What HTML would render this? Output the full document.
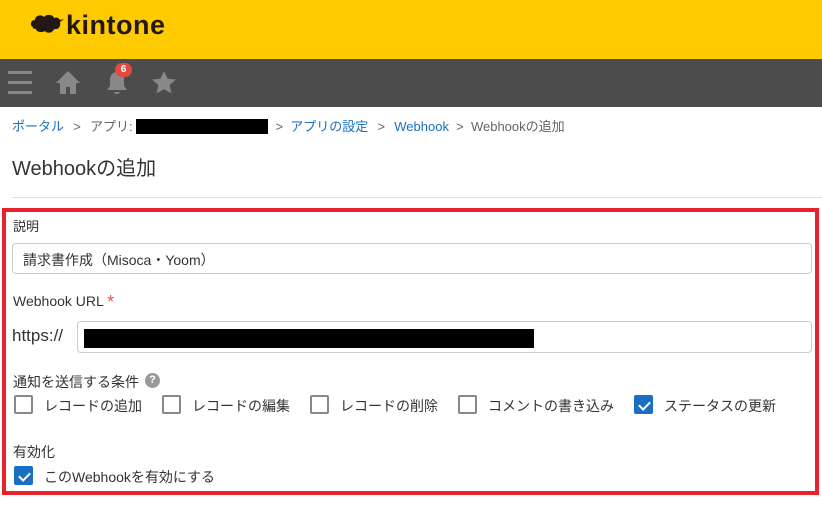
<!DOCTYPE html>
<html><head><meta charset="utf-8"><style>
*{margin:0;padding:0;box-sizing:border-box}
body{width:822px;height:505px;overflow:hidden;background:#fff;font-family:"Liberation Sans","Noto Sans CJK JP",sans-serif;color:#333;position:relative}
.a{position:absolute;white-space:nowrap}
.cb{position:absolute;width:19px;height:19px;border:2px solid #888;border-radius:2px;background:#fff}
.cb.on{background:#1b6fc2;border-color:#1b6fc2}
.cb.on:after{content:"";position:absolute;left:5px;top:2px;width:5px;height:9px;border:solid #fff;border-width:0 2px 2px 0;transform:rotate(45deg)}
.lbl{position:absolute;font-size:14px;color:#333;white-space:nowrap}
.sep{display:inline-block;width:22px;text-align:center;color:#666}
</style></head><body>
<div class="a" style="left:0;top:0;width:822px;height:59px;background:#fdcb00"></div>
<svg class="a" style="left:30px;top:13px" width="34" height="26" viewBox="0 0 34 26"><path d="M3 14c-3-1-3-7 2-7 0-5 7-6 9-3 2-3 9-3 10 1 3-1 5 0 6 2l4-1-4 3c1 5-2 8-6 7-1 4-7 5-9 2-3 2-9 1-9-2-2 0-4-1-3-2z" fill="#231815"/></svg>
<div class="a" style="left:66px;top:10px;font-size:27px;font-weight:bold;color:#231815;letter-spacing:0.5px">kintone</div>
<div class="a" style="left:0;top:59px;width:822px;height:48px;background:#4c4c4c"></div>
<div class="a" style="left:8px;top:71px;width:24px;height:3px;background:#888;box-shadow:0 10px 0 #888,0 20px 0 #888"></div>
<svg class="a" style="left:55px;top:70px" width="26" height="26" viewBox="0 0 26 26"><path d="M13 1L1 13h4v11h6v-7h4v7h6V13h4z" fill="#888"/></svg>
<svg class="a" style="left:104px;top:70px" width="26" height="26" viewBox="0 0 26 26"><path d="M13 2c-5 0-7 4-7 8v6l-3 4h20l-3-4v-6c0-4-2-8-7-8zM10 22h6a3 2 0 0 1-6 0z" fill="#888"/></svg>
<div class="a" style="left:115px;top:63px;width:17px;height:14px;border-radius:7px;background:#e04a3f;color:#fff;font-size:10px;text-align:center;line-height:14px;font-weight:bold">6</div>
<svg class="a" style="left:151px;top:70px" width="26" height="26" viewBox="0 0 24 24"><path d="M12 1l3.3 7 7.7.8-5.8 5.2 1.7 7.6L12 17.8 5.1 21.6l1.7-7.6L1 8.8 8.7 8z" fill="#888"/></svg>
<div class="a" style="left:12px;top:116px;font-size:13px;color:#666"><span style="color:#1b6fc2">ポータル</span><span class="sep" style="width:26px">&gt;</span>アプリ: <span style="display:inline-block;width:132px;height:15px;background:#000;vertical-align:-3px"></span><span class="sep">&gt;</span><span style="color:#1b6fc2">アプリの設定</span><span class="sep" style="width:26px">&gt;</span><span style="color:#1b6fc2">Webhook</span><span class="sep">&gt;</span>Webhookの追加</div>
<div class="a" style="left:12px;top:152px;font-size:20px;color:#333">Webhookの追加</div>
<div class="a" style="left:12px;top:197px;width:810px;height:1px;background:#ddd"></div>
<div class="a" style="left:2px;top:208px;width:817px;height:287px;border:4px solid #e8222a"></div>
<div class="lbl" style="left:13px;top:216px;font-size:13px">説明</div>
<div class="a" style="left:12px;top:243px;width:800px;height:31px;border:1px solid #ccc;border-radius:4px;font-size:14px;padding:6px 10px">請求書作成（Misoca・Yoom）</div>
<div class="lbl" style="left:13px;top:292px">Webhook URL <span style="color:#e8533f;font-size:18px;vertical-align:-2px">*</span></div>
<div class="lbl" style="left:12px;top:326px;font-size:17px">https://</div>
<div class="a" style="left:77px;top:321px;width:735px;height:32px;border:1px solid #ccc;border-radius:4px"></div>
<div class="a" style="left:84px;top:329px;width:450px;height:19px;background:#000"></div>
<div class="lbl" style="left:13px;top:372px">通知を送信する条件</div>
<div class="a" style="left:145px;top:373px;width:15px;height:15px;border-radius:50%;background:#999;color:#fff;font-size:11px;font-weight:bold;text-align:center;line-height:15px">?</div>
<div class="cb" style="left:14px;top:395px"></div><div class="lbl" style="left:44px;top:396px">レコードの追加</div>
<div class="cb" style="left:162px;top:395px"></div><div class="lbl" style="left:192px;top:396px">レコードの編集</div>
<div class="cb" style="left:310px;top:395px"></div><div class="lbl" style="left:340px;top:396px">レコードの削除</div>
<div class="cb" style="left:458px;top:395px"></div><div class="lbl" style="left:488px;top:396px">コメントの書き込み</div>
<div class="cb on" style="left:634px;top:395px"></div><div class="lbl" style="left:664px;top:396px">ステータスの更新</div>
<div class="lbl" style="left:13px;top:442px">有効化</div>
<div class="cb on" style="left:14px;top:466px"></div><div class="lbl" style="left:44px;top:467px">このWebhookを有効にする</div>
</body></html>
